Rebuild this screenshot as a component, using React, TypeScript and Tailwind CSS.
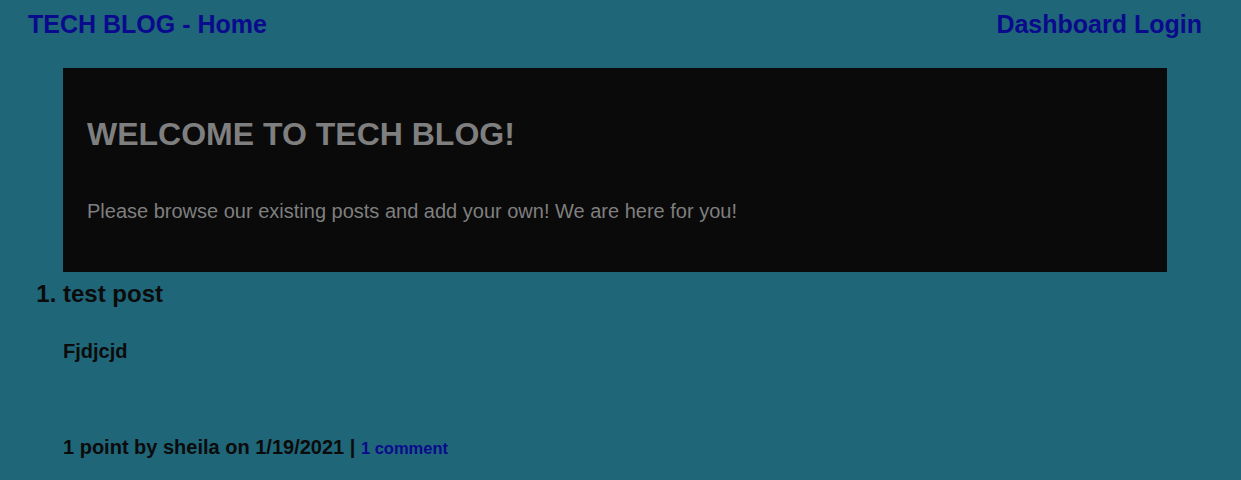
export default function App() {
  return (
    <div className="min-h-[480px] bg-[#1f6679] font-['Liberation_Sans',Arial,sans-serif]">
      <header className="flex justify-between items-center pl-[28px] pr-[39px] pt-[2px] h-[47px]">
        <a className="text-[25px] font-bold text-[#0a0a8c]">TECH BLOG - Home</a>
        <nav className="flex gap-[7px] text-[25px] font-bold text-[#0a0a8c]">
          <a>Dashboard</a>
          <a>Login</a>
        </nav>
      </header>
      <section className="mt-[21px] ml-[63px] w-[1104px] h-[204px] bg-[#0a0a0a] px-[24px] pt-[48px]">
        <h1 className="text-[32px] font-bold text-[#7f7f7f] leading-[36px]">WELCOME TO TECH BLOG!</h1>
        <p className="mt-[44px] text-[20px] text-[#7f7f7f]">
          Please browse our existing posts and add your own! We are here for you!
        </p>
      </section>
      <ol className="list-decimal pl-[63px] text-[#0b0b0b]">
        <li className="text-[24px] font-bold">
          <h3 className="mt-[4px] leading-[28px]">test post</h3>
          <p className="mt-[31px] text-[20px] leading-[24px]">Fjdjcjd</p>
          <p className="mt-[72px] text-[20px] leading-[24px]">
            1 point by sheila on 1/19/2021 |{" "}
            <a className="text-[16.5px] text-[#0a0a8c]">1 comment</a>
          </p>
        </li>
      </ol>
    </div>
  );
}
